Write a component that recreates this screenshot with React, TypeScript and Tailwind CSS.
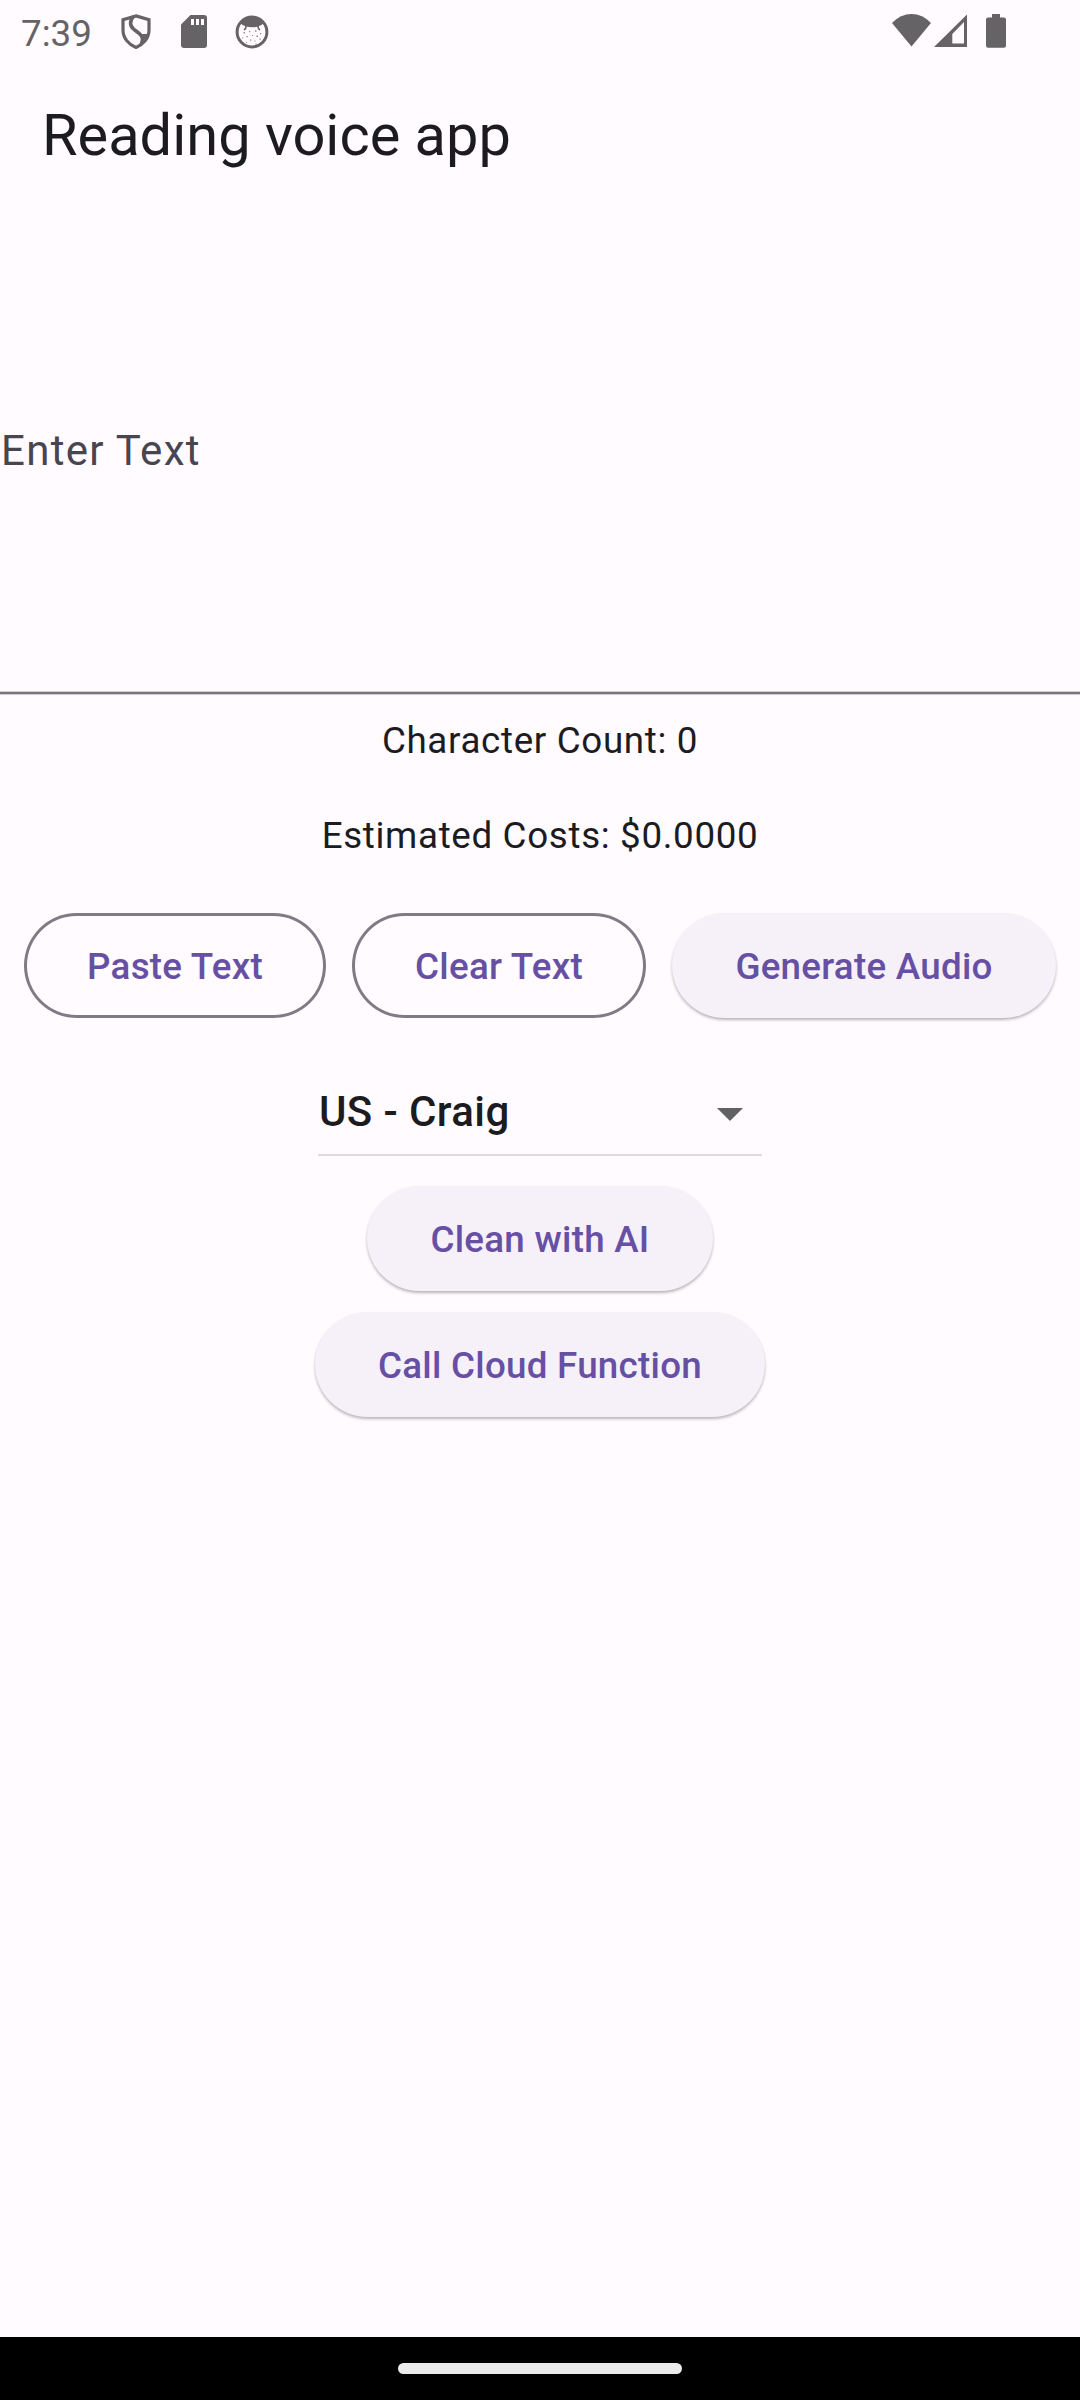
import type { ReactNode } from "react";

function ShieldIcon() {
  return (
    <svg className="ml-[29px] h-[36px] w-[30px]" viewBox="0 0 30 36" fill="none" stroke="#656366" strokeWidth="3.2">
      <path d="M15 1.9 L28 5.8 V16 C28 24 22.5 30.5 15 33.4 C7.5 30.5 2 24 2 16 V5.8 Z" />
      <path d="M12.5 2.500 C8.6 6.5 8.6 11.5 12.5 15 C16.5 18.5 20.8 20 22.4 25.6" strokeWidth="3.6" />
      <path d="M19 20 L27 20 L20.5 30.500 L17.500 31.500 Q21 27 19 20 Z" fill="#656366" stroke="none" />
    </svg>
  );
}

function SdCardIcon() {
  return (
    <svg className="ml-[30px] h-[34px] w-[26px]" viewBox="0 0 26 34">
      <path d="M9.5 0 H23 Q26 0 26 3 V30 Q26 33 23 33 H3 Q0 33 0 30 V9.5 Z" fill="#656366" />
      <path d="M10 4 H13 V10 H10 Z M15 4 H18 V10 H15 Z M20 4 H23 V10 H20 Z" fill="#fffbff" />
    </svg>
  );
}

function FaceIcon() {
  return (
    <svg className="ml-[28px] h-[34px] w-[34px]" viewBox="0 0 34 34" fill="#656366">
      <circle cx="17" cy="17" r="14.900" fill="none" stroke="#656366" strokeWidth="3" />
      <path d="M5 8 Q10 1.5 17 1.5 Q24 1.5 29 8 Q26.5 10.5 23 11.5 Q17 13 11 11.5 Q7.5 10.5 5 8 Z" />
      <path d="M11 10 Q11.5 13.5 9 15 M23 10 Q22.5 13.5 25 15" fill="none" stroke="#656366" strokeWidth="1.6" />
      <path d="M8.5 17h1.4v1.4h-1.4z M14 16h1.2v1.2h-1.2z M20 15.3h1.5v1.5h-1.5z M25 18h1.2v1.2h-1.2z M11.5 21h1.3v1.3h-1.3z M17 20h1v1h-1z M21.5 20.5h1.5v1.5h-1.5z M7 22.5h1v1h-1z M15 24.5h1.3v1.3h-1.3z M19.5 25.5h1v1h-1z M24.5 23.5h1.3v1.3h-1.3z M11 27h1v1h-1z M20.5 28.5h1v1h-1z" opacity=".75" />
    </svg>
  );
}

function StatusBar() {
  return (
    <header className="flex h-[64px] items-start pl-[21px] pr-[74px] text-[#656366]">
      <span className="mt-[12px] w-[71px] text-[36.75px] leading-[43px]">7:39</span>
      <div className="mt-[14px] flex flex-1 items-start">
        <ShieldIcon />
        <div className="mt-[1px] flex">
          <SdCardIcon />
          <FaceIcon />
        </div>
      </div>
      <svg className="mt-[14px] h-[33px] w-[39px]" viewBox="0 0 39 33">
        <path d="M0 9 Q8.5 0 19.5 0 Q30.500 0 39 9 L19.500 32.600 Z" fill="currentColor" />
      </svg>
      <svg className="ml-[3px] mt-[14px] h-[33px] w-[33px]" viewBox="0 0 33 33">
        <path fillRule="evenodd" d="M33 .4 V33 H0 Z M30 8 L18.300 20 V29.500 H30 Z" fill="currentColor" />
      </svg>
      <svg className="ml-[19px] mt-[14px] h-[34px] w-[20px]" viewBox="0 0 20 34">
        <path d="M6 0 H14 V3.500 H18 Q20 3.500 20 5.500 V31.500 Q20 33.700 18 33.700 H2 Q0 33.700 0 31.500 V5.500 Q0 3.500 2 3.500 H6 Z" fill="currentColor" />
      </svg>
    </header>
  );
}

function OutlinedButton({ children, className }: { children: ReactNode; className: string }) {
  return (
    <button
      className={`h-[105px] shrink-0 whitespace-nowrap rounded-full pt-[2px] text-[36.75px] font-medium tracking-[0.26px] text-[#6750a4] shadow-[inset_0_0_0_3px_#7f7a84] ${className}`}
    >
      {children}
    </button>
  );
}

function ElevatedButton({ children, className }: { children: ReactNode; className: string }) {
  return (
    <button
      className={`h-[105px] shrink-0 whitespace-nowrap rounded-full bg-[#f6f1f9] pt-[2px] text-[36.75px] font-medium tracking-[0.26px] text-[#6750a4] shadow-[0_2px_3px_rgba(0,0,0,0.28)] ${className}`}
    >
      {children}
    </button>
  );
}

export default function App() {
  return (
    <div className="flex h-[2400px] w-[1080px] flex-col overflow-hidden bg-[#fffbff] font-['Roboto',sans-serif] text-[#1c1b1f]">
      <StatusBar />
      <h1 className="flex h-[141px] items-center pl-[42px] text-[57.75px] leading-[74px]">Reading voice app</h1>
      <div className="flex h-[489px] items-center border-b-2 border-[#79747e] pt-[4px] pl-[1px] text-[42px] tracking-[1.31px] text-[#49454f] shadow-[0_1px_0_#cfcbd1,inset_0_-1px_0_#cfcbd1]">
        Enter Text
      </div>
      <main className="flex flex-1 flex-col items-center">
        <p className="mt-[20px] text-[36.75px] leading-[53px] tracking-[0.66px]">Character Count: 0</p>
        <p className="mt-[42px] text-[36.75px] leading-[53px] tracking-[0.66px]">Estimated Costs: $0.0000</p>
        <div className="mt-[51px] flex w-full pl-[24px]">
          <OutlinedButton className="w-[302px]">Paste Text</OutlinedButton>
          <OutlinedButton className="ml-[26px] w-[294px]">Clear Text</OutlinedButton>
          <ElevatedButton className="ml-[26px] w-[384px]">Generate Audio</ElevatedButton>
        </div>
        <div className="mt-[50px] flex h-[88px] w-[444px] items-center justify-between border-b-2 border-[#dcdadc] pl-px pr-[19px] text-[42px] font-medium tracking-[0.39px]">
          <span>US - Craig</span>
          <svg className="mt-[6px] h-[13px] w-[26px]" viewBox="0 0 26 13">
            <path d="M0 0 H26 L13 13 Z" fill="#616161" />
          </svg>
        </div>
        <ElevatedButton className="mt-[30px] w-[345.500px]">Clean with AI</ElevatedButton>
        <ElevatedButton className="mt-[21px] w-[450px]">Call Cloud Function</ElevatedButton>
      </main>
      <footer className="flex h-[63px] items-center justify-center bg-black">
        <div className="h-[11px] w-[284px] rounded-full bg-[#ebebeb]" />
      </footer>
    </div>
  );
}
